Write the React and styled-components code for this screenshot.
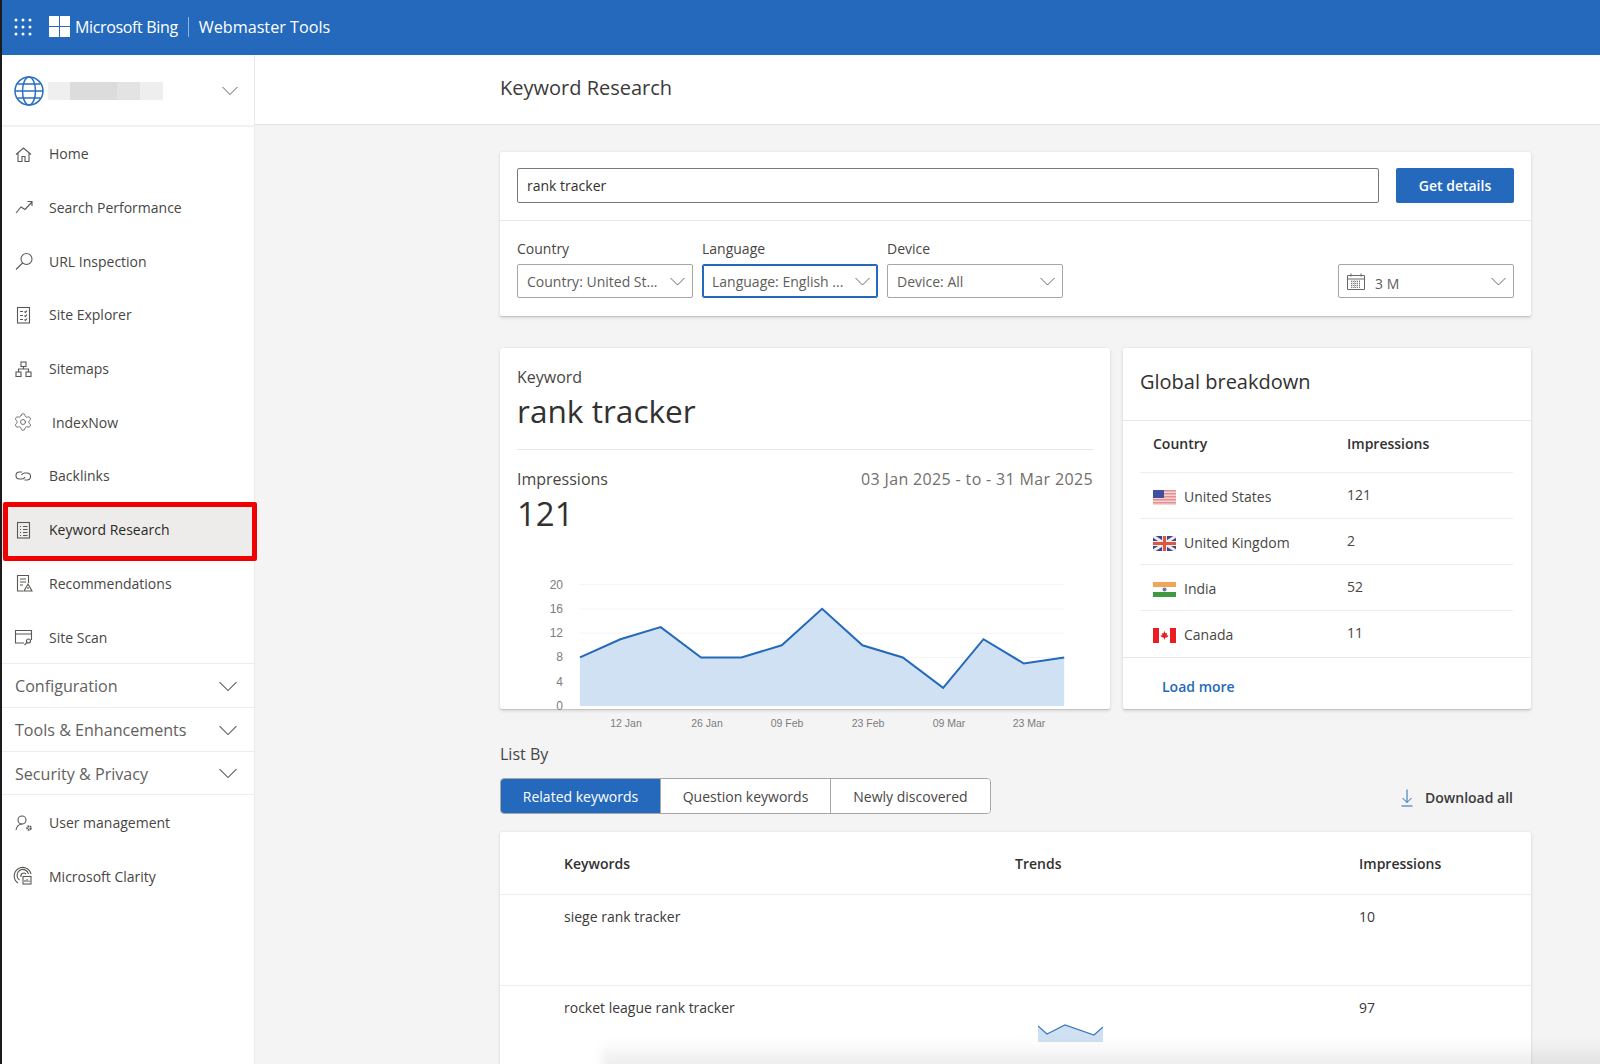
import React from "react";
import styled, { createGlobalStyle } from "styled-components";
import { Settings } from "lucide-react";

const GlobalStyle = createGlobalStyle`
  html, body {
    margin: 0;
    padding: 0;
    background: #f4f4f4;
    overflow: hidden;
  }
  * {
    box-sizing: border-box;
  }
`;

const Page = styled.div`
  position: relative;
  width: 1600px;
  height: 1064px;
  overflow: hidden;
  border-left: 2px solid #1b1b1b;
  background: #f4f4f4;
  font-family: "Open Sans", "Noto Sans", sans-serif;
  color: #323130;
  font-size: 14px;
`;

const TopBar = styled.header`
  display: flex;
  align-items: center;
  height: 55px;
  background: #2469bb;
  color: #fff;
  padding: 0 0 2px 12px;
`;

const AppsSpacer = styled.span`
  width: 17px;
`;

const BrandText = styled.span`
  font-size: 16px;
  letter-spacing: -0.35px;
  margin-left: 5px;
`;

const BrandDivider = styled.span`
  width: 1px;
  height: 20px;
  background: #8db3e0;
  margin: 0 10px 0 10px;
`;

const ProductText = styled.span`
  font-size: 16.2px;
  font-weight: 500;
`;

const Body = styled.div`
  display: flex;
  height: 1009px;
`;

const Sidebar = styled.nav`
  position: relative;
  flex: 0 0 253px;
  background: #fff;
  border-right: 1px solid #ebebeb;
`;

const SiteRow = styled.div`
  display: flex;
  align-items: center;
  height: 72px;
  padding: 2px 16px 0 12px;
  border-bottom: 2px solid #f2f2f2;
`;

const BlurredName = styled.div`
  width: 115px;
  height: 18px;
  margin-left: 4px;
  margin-right: auto;
  background: linear-gradient(90deg, #efefef 0 19%, #dcdcdc 19% 60%, #e3e3e3 60% 80%, #eeeeee 80%);
`;

const NavItem = styled.div`
  display: flex;
  align-items: center;
  height: 53.7px;
  padding-left: 11px;
  color: ${(p) => (p.$active ? "#2b2a29" : "#484644")};
  background: ${(p) => (p.$active ? "#edecea" : "transparent")};
  position: relative;

  /* the red annotation box drawn over the screenshot */
  ${(p) =>
    p.$active &&
    `
    &::after {
      content: "";
      position: absolute;
      left: 1px;
      right: -3px;
      top: -1px;
      bottom: -4px;
      border: 5px solid #f00000;
      border-radius: 2px;
    }
  `}
`;

const NavIcon = styled.span`
  display: flex;
  flex: 0 0 20px;
  width: 20px;
  height: 20px;
  color: #5a5856;
  margin-right: ${(p) => (p.$wide ? "19px" : "16px")};
`;

const GroupRow = styled.div`
  display: flex;
  align-items: center;
  justify-content: space-between;
  height: 44px;
  padding: 2px 17px 0 13px;
  border-top: 1px solid #ededed;
  font-size: 16.1px;
  color: #636160;
  &:last-of-type {
    border-bottom: 1px solid #ededed;
  }
`;

const Groups = styled.div`
  height: 133px;
  margin-top: -1px;
`;

const Main = styled.main`
  flex: 1;
  min-width: 0;
`;

const TitleBar = styled.div`
  display: flex;
  align-items: center;
  height: 70px;
  padding: 0 0 4px 245px;
  background: #fff;
  border-bottom: 1px solid #e3e3e3;
`;

const PageTitle = styled.h1`
  margin: 0;
  font-size: 20px;
  font-weight: 400;
  color: #3b3a39;
`;

const Content = styled.div`
  width: 1031px;
  margin: 27px 0 0 245px;
`;

const Card = styled.section`
  background: #fff;
  border-radius: 2px;
  box-shadow: 0 1.6px 3.6px rgba(0, 0, 0, 0.13), 0 0.3px 0.9px rgba(0, 0, 0, 0.11);
`;

const SearchRow = styled.div`
  display: flex;
  gap: 17px;
  height: 69px;
  padding: 16px 17px 0;
  border-bottom: 1px solid #e6e6e6;
`;

const SearchBox = styled.div`
  flex: 1;
  height: 35px;
  display: flex;
  align-items: center;
  padding: 0 9px;
  border: 1px solid #7a7977;
  border-radius: 2px;
  color: #323130;
`;

const PrimaryButton = styled.button`
  width: 118px;
  height: 35px;
  border: 0;
  border-radius: 2px;
  background: #2469bb;
  color: #fff;
  font: 600 14px "Open Sans", sans-serif;
`;

const FilterRow = styled.div`
  display: flex;
  align-items: flex-end;
  gap: 9px;
  height: 95px;
  padding: 0 17px 18px;
`;

const Field = styled.div`
  display: flex;
  flex-direction: column;
  gap: 6px;
  width: 176px;
  margin-left: ${(p) => (p.$push ? "auto" : "0")};
`;

const FieldLabel = styled.label`
  font-size: 14px;
  line-height: 19px;
  color: #484644;
`;

const Select = styled.div`
  display: flex;
  align-items: center;
  height: 34px;
  padding: 0 7px 0 9px;
  border: 1px solid ${(p) => (p.$focus ? "#2469bb" : "#a8a6a4")};
  box-shadow: ${(p) => (p.$focus ? "inset 0 0 0 1px #2469bb" : "none")};
  border-radius: 2px;
  color: #605e5c;
  white-space: nowrap;
  svg:last-child {
    margin-left: auto;
  }
`;

const DateIcon = styled.span`
  display: flex;
  margin: 0 10px 0 -1px;
  color: #6a6866;
`;

const DateText = styled.span`
  margin-top: 4px;
`;

const StatsGrid = styled.div`
  display: grid;
  grid-template-columns: 610px 408px;
  gap: 13px;
  height: 361px;
  margin-top: 32px;
`;

const KeywordCard = styled(Card)`
  height: 361px;
  padding: 19px 17px 0;
`;

const Eyebrow = styled.div`
  font-size: 16px;
  line-height: 20px;
  color: #484644;
`;

const BigKeyword = styled.div`
  margin-top: 2px;
  font-size: 31.6px;
  line-height: 44px;
  color: #323130;
  padding-bottom: 16px;
  border-bottom: 1px solid #e6e6e6;
`;

const StatHead = styled.div`
  display: flex;
  justify-content: space-between;
  margin-top: 19px;
  font-size: 16px;
  line-height: 20px;
  color: #484644;
`;

const DateRange = styled.span`
  color: #716f6d;
  letter-spacing: 0.35px;
`;

const BigNumber = styled.div`
  margin-top: 2px;
  font-size: 33px;
  line-height: 46px;
`;

const ChartSvg = styled.svg`
  display: block;
  margin: 33px 0 0 -17px;
  overflow: visible;
`;

const BreakdownCard = styled(Card)`
  display: flex;
  flex-direction: column;
  height: 361px;
`;

const BreakdownTitle = styled.h2`
  margin: 0;
  height: 73px;
  padding: 20px 17px 0;
  font-size: 20px;
  line-height: 28px;
  font-weight: 400;
  border-bottom: 1px solid #e6e6e6;
`;

const BreakdownTable = styled.div`
  flex: 1;
  padding: 0 18px 0 17px;
`;

const BreakdownRow = styled.div`
  display: grid;
  grid-template-columns: 194px 1fr;
  height: ${(p) => (p.$head ? 52 : 46)}px;
  padding: ${(p) => (p.$head ? "13px" : "12px")} 13px 0;
  border-bottom: 1px solid ${(p) => (p.$last ? "transparent" : "#eeeeee")};
  font-weight: ${(p) => (p.$head ? 600 : 400)};
  color: ${(p) => (p.$head ? "#323130" : "#484644")};
  line-height: 20px;
`;

const CountryCell = styled.div`
  display: flex;
  align-items: center;
  gap: 8px;
  height: 24px;
`;

const LoadMore = styled.div`
  height: 52px;
  padding: 19px 39px 0;
  border-top: 1px solid #e6e6e6;
  color: #2469bb;
  font-weight: 600;
  line-height: 20px;
`;

const ListTitle = styled.div`
  margin-top: 35px;
  font-size: 16px;
  line-height: 20px;
  color: #484644;
`;

const ListBar = styled.div`
  display: flex;
  align-items: center;
  justify-content: space-between;
  margin-top: 14px;
  padding-right: 18px;
`;

const TabGroup = styled.div`
  display: flex;
  height: 36px;
  border: 1px solid #a8a6a4;
  border-radius: 4px;
  overflow: hidden;
  background: #fff;
`;

const Tab = styled.div`
  display: flex;
  align-items: center;
  justify-content: center;
  width: ${(p) => p.$width}px;
  color: ${(p) => (p.$active ? "#fff" : "#484644")};
  background: ${(p) => (p.$active ? "#2469bb" : "#fff")};
  border-left: ${(p) => (p.$first ? "0" : "1px solid #a8a6a4")};
`;

const DownloadAll = styled.div`
  display: flex;
  align-items: center;
  gap: 11px;
  margin-top: 3px;
  font-weight: 600;
  color: #3b3a39;
`;

const TableCard = styled(Card)`
  margin-top: 18px;
  height: 300px;
`;

const TableRow = styled.div`
  display: grid;
  grid-template-columns: 451px 344px 1fr;
  height: ${(p) => (p.$head ? 63 : 91)}px;
  padding: ${(p) => (p.$head ? "22px" : "12px")} 0 0 64px;
  border-bottom: 1px solid #eeeeee;
  font-weight: ${(p) => (p.$head ? 600 : 400)};
  color: ${(p) => (p.$head ? "#323130" : "#3b3a39")};
  line-height: 20px;
`;

const TrendCell = styled.div`
  padding: 26px 0 0 23px;
`;

/* the soft shadow at the bottom edge of the screenshot */
const BottomFade = styled.div`
  position: absolute;
  left: 600px;
  right: -10px;
  bottom: -6px;
  height: 30px;
  background: linear-gradient(180deg, rgba(0, 0, 0, 0), rgba(0, 0, 0, 0.09));
  filter: blur(5px);
`;

const Line = (props) => (
  <svg width="20" height="20" viewBox="0 0 20 20" fill="none" stroke="currentColor" strokeWidth="1.1" {...props} />
);

const HomeIcon = () => (
  <Line><path d="M3 10.500 10.500 4 18 10.500M5 9v8.500h4v-5h3v5h4V9" /></Line>
);
const TrendIcon = () => (
  <Line><path d="M3 15 8 9l4 2.500 7-7.500M14.500 3.500H19V8" /></Line>
);
const SearchIcon = () => (
  <Line><circle cx="13.500" cy="8" r="5.500" /><path d="M9.500 12 3 18.500" /></Line>
);
const ExplorerIcon = () => (
  <Line>
    <rect x="4.500" y="2.500" width="12" height="15.500" />
    <path d="M7 6.500h3M7 10.500h3M7 14.500h3M11.500 6.500l1 1 1.500-2M11.500 10.500l1 1 1.500-2M11.500 14.500l1 1 1.500-2" />
  </Line>
);
const SitemapIcon = () => (
  <Line>
    <rect x="8" y="3" width="5" height="4.500" />
    <rect x="3" y="13" width="5" height="4.500" />
    <rect x="13" y="13" width="5" height="4.500" />
    <path d="M10.500 7.500V10M5.500 13v-3h10v3" />
  </Line>
);
const LinksIcon = () => (
  <Line>
    <path d="M9 6H6.500a3.500 3.500 0 0 0 0 7H9a3.500 3.500 0 0 0 3-2" />
    <path d="M11.500 14H14a3.500 3.500 0 0 0 0-7h-2.500a3.500 3.500 0 0 0-3 2" />
  </Line>
);
const ListDocIcon = () => (
  <Line>
    <rect x="4.500" y="2.500" width="12" height="15.500" />
    <path d="M7 6.500h1M10 6.500h4.500M7 9.500h1M10 9.500h4.500M7 12.500h1M10 12.500h4.500M7 15.500h1M10 15.500h4.500" />
  </Line>
);
const RecoIcon = () => (
  <Line>
    <path d="M10 18H4.500V2.500h11V10" />
    <path d="M7 6h6M7 9h6M7 12h3" />
    <path d="m15 11 4 7h-8zM15 14v2" />
  </Line>
);
const ScanIcon = () => (
  <Line>
    <path d="M11 16H2.500V3.500h16V13M2.500 7h16" />
    <circle cx="15.500" cy="14" r="2" />
    <path d="m14 15.500-2.500 2.500" />
  </Line>
);
const UserGearIcon = () => (
  <Line>
    <circle cx="9" cy="7" r="4" />
    <path d="M3 17c.5-3.500 2.500-5.500 6-6" />
    <circle cx="16" cy="15" r="1.800" strokeWidth="2" strokeDasharray="1.500 .6" />
  </Line>
);
const ClarityIcon = () => (
  <Line>
    <path d="M5 17a8.500 8.500 0 1 1 13-9" />
    <path d="M6.500 14a5.800 5.800 0 1 1 9-6" />
    <path d="M8 11a3 3 0 0 1 5-3" />
    <rect x="10" y="10.500" width="8" height="7.500" />
    <path d="M12 16v-2M14 16v-3M16 16v-1.500" />
  </Line>
);
const GearIcon = () => <Settings size={20} strokeWidth={1} />;

const Chevron = ({ size = 16, color = "#605e5c" }) => (
  <svg width={size} height={size * 0.6} viewBox="0 0 16 9.600" fill="none" stroke={color} strokeWidth="1">
    <path d="M.5 1 8 8.500 15.500 1" />
  </svg>
);

const AppsGrid = () => (
  <svg width="18" height="18" viewBox="0 0 18 18" fill="#fff">
    {[2, 9, 16].flatMap((y) =>
      [2, 9, 16].map((x) => <circle key={`${x}-${y}`} cx={x} cy={y} r="1.500" />)
    )}
  </svg>
);

const WindowsLogo = () => (
  <svg width="21" height="21" viewBox="0 0 21 21" fill="#fff">
    <rect width="10" height="10" />
    <rect x="11" width="10" height="10" />
    <rect y="11" width="10" height="10" />
    <rect x="11" y="11" width="10" height="10" />
  </svg>
);

const GlobeIcon = () => (
  <svg width="30" height="30" viewBox="0 0 30 30" fill="none" stroke="#2a6fc0" strokeWidth="1.500">
    <circle cx="15" cy="15" r="14" />
    <ellipse cx="15" cy="15" rx="6.500" ry="14" />
    <path d="M1 15h28M3.500 8h23M3.500 22h23" />
  </svg>
);

const CalendarIcon = () => (
  <svg width="18" height="17" viewBox="0 0 18 17" fill="none" stroke="currentColor" strokeWidth="1">
    <path d="M.5 2.500h17v14H.5zM.5 6h17M4 .5v3M14 .5v3" />
    <path d="M4 8.500h10M4 10.500h10M4 12.500h10M4 14.500h10M5 7.500v8M7.500 7.500v8M10 7.500v8M12.500 7.500v8" strokeDasharray="1 1" opacity=".8" />
  </svg>
);

const DownloadIcon = () => (
  <svg width="14" height="18" viewBox="0 0 14 18" fill="none" stroke="#2469bb" strokeWidth="1">
    <path d="M7 .5v13M2.500 9 7 13.500 11.500 9M1.500 17h11" />
  </svg>
);

const UsFlag = () => (
  <svg width="23" height="15" viewBox="0 0 23 15">
    <rect width="23" height="15" fill="#f6d3d3" />
    {[0, 3, 6, 9, 12].map((y) => (
      <rect key={y} y={y} width="23" height="1.500" fill="#e58f8f" />
    ))}
    <rect width="11" height="8" fill="#3f50a0" />
  </svg>
);

const UkFlag = () => (
  <svg width="23" height="15" viewBox="0 0 23 15">
    <rect width="23" height="15" fill="#33488f" />
    <path d="M0 0 23 15M23 0 0 15" stroke="#f3e9e9" strokeWidth="3" />
    <path d="M11.500 0v15M0 7.500h23" stroke="#f3e9e9" strokeWidth="5" />
    <path d="M11.500 0v15M0 7.500h23" stroke="#d9583f" strokeWidth="3" />
  </svg>
);

const InFlag = () => (
  <svg width="23" height="15" viewBox="0 0 23 15">
    <rect width="23" height="5" fill="#f1a557" />
    <rect y="5" width="23" height="5" fill="#fff" />
    <rect y="10" width="23" height="5" fill="#3f9a3f" />
    <circle cx="11.500" cy="7.500" r="2" fill="#6a78a8" />
  </svg>
);

const CaFlag = () => (
  <svg width="23" height="15" viewBox="0 0 23 15">
    <rect width="23" height="15" fill="#fff" />
    <rect width="6" height="15" fill="#ea1c24" />
    <rect x="17" width="6" height="15" fill="#ea1c24" />
    <path d="M11.500 3 12.700 5.500l1.500-.6-.6 2.800 1.800-.6-.5 1.700-3 1.200v1.500h-.8V10l-3-1.200-.5-1.700 1.800.6-.6-2.800 1.500.6z" fill="#ea1c24" />
  </svg>
);

const navTop = [
  { label: "Home", icon: <HomeIcon /> },
  { label: "Search Performance", icon: <TrendIcon /> },
  { label: "URL Inspection", icon: <SearchIcon /> },
  { label: "Site Explorer", icon: <ExplorerIcon /> },
  { label: "Sitemaps", icon: <SitemapIcon /> },
  { label: "IndexNow", icon: <GearIcon />, wide: true },
  { label: "Backlinks", icon: <LinksIcon /> },
  { label: "Keyword Research", icon: <ListDocIcon />, active: true },
  { label: "Recommendations", icon: <RecoIcon /> },
  { label: "Site Scan", icon: <ScanIcon /> },
];

const navBottom = [
  { label: "User management", icon: <UserGearIcon /> },
  { label: "Microsoft Clarity", icon: <ClarityIcon /> },
];

const groups = ["Configuration", "Tools & Enhancements", "Security & Privacy"];

const countries = [
  { name: "United States", value: 121, flag: <UsFlag /> },
  { name: "United Kingdom", value: 2, flag: <UkFlag /> },
  { name: "India", value: 52, flag: <InFlag /> },
  { name: "Canada", value: 11, flag: <CaFlag /> },
];

const trend = [8, 11, 13, 8, 8, 10, 16, 10, 8, 3, 11, 7, 8];
const toX = (i) => 80 + i * 40.35;
const toY = (v) => 136 - v * 6.07;
const linePoints = trend.map((v, i) => `${toX(i)},${toY(v)}`).join(" ");
const areaPoints = `${toX(0)},136 ${linePoints} ${toX(12)},136`;
const xLabels = [
  ["12 Jan", 126],
  ["26 Jan", 207],
  ["09 Feb", 287],
  ["23 Feb", 368],
  ["09 Mar", 449],
  ["23 Mar", 529],
];

const TrendChart = () => (
  <ChartSvg width="610" height="170" viewBox="0 0 610 170" fontFamily="'Liberation Sans', sans-serif">
    {[20, 16, 12, 8].map((v) => (
      <line key={v} x1="80" x2="564" y1={toY(v)} y2={toY(v)} stroke="#f4f4f4" />
    ))}
    <polygon points={areaPoints} fill="#d0e1f3" />
    <polyline points={linePoints} fill="none" stroke="#2469bb" strokeWidth="2" />
    {[20, 16, 12, 8, 4, 0].map((v) => (
      <text key={v} x="63" y={toY(v) + 4} textAnchor="end" fontSize="12" fill="#7d7d7d">{v}</text>
    ))}
    {xLabels.map(([label, x]) => (
      <text key={label} x={x} y="157" textAnchor="middle" fontSize="10.500" fill="#7d7d7d">{label}</text>
    ))}
  </ChartSvg>
);

const Sparkline = () => (
  <svg width="65" height="18" viewBox="0 0 65 18">
    <polygon points="0,2 9,10 27,1 56,11 65,3 65,18 0,18" fill="#cfe0f3" />
    <polyline points="0,2 9,10 27,1 56,11 65,3" fill="none" stroke="#3a77c0" strokeWidth="1.200" />
  </svg>
);

const renderNav = (item) => (
  <NavItem key={item.label} $active={item.active}>
    <NavIcon $wide={item.wide}>{item.icon}</NavIcon>
    {item.label}
  </NavItem>
);

export default function App() {
  return (
    <Page>
      <GlobalStyle />
      <TopBar>
        <AppsGrid />
        <AppsSpacer />
        <WindowsLogo />
        <BrandText>Microsoft Bing</BrandText>
        <BrandDivider />
        <ProductText>Webmaster Tools</ProductText>
      </TopBar>
      <Body>
        <Sidebar>
          <SiteRow>
            <GlobeIcon />
            <BlurredName />
            <Chevron />
          </SiteRow>
          {navTop.map(renderNav)}
          <Groups>
            {groups.map((g) => (
              <GroupRow key={g}>
                {g}
                <Chevron size={18} />
              </GroupRow>
            ))}
          </Groups>
          {navBottom.map(renderNav)}
        </Sidebar>
        <Main>
          <TitleBar>
            <PageTitle>Keyword Research</PageTitle>
          </TitleBar>
          <Content>
            <Card>
              <SearchRow>
                <SearchBox>rank tracker</SearchBox>
                <PrimaryButton>Get details</PrimaryButton>
              </SearchRow>
              <FilterRow>
                <Field>
                  <FieldLabel>Country</FieldLabel>
                  <Select>Country: United St...<Chevron size={15} /></Select>
                </Field>
                <Field>
                  <FieldLabel>Language</FieldLabel>
                  <Select $focus>Language: English ...<Chevron size={15} /></Select>
                </Field>
                <Field>
                  <FieldLabel>Device</FieldLabel>
                  <Select>Device: All<Chevron size={15} /></Select>
                </Field>
                <Field $push>
                  <Select>
                    <DateIcon><CalendarIcon /></DateIcon>
                    <DateText>3 M</DateText>
                    <Chevron size={15} />
                  </Select>
                </Field>
              </FilterRow>
            </Card>
            <StatsGrid>
              <KeywordCard>
                <Eyebrow>Keyword</Eyebrow>
                <BigKeyword>rank tracker</BigKeyword>
                <StatHead>
                  <span>Impressions</span>
                  <DateRange>03 Jan 2025 - to - 31 Mar 2025</DateRange>
                </StatHead>
                <BigNumber>121</BigNumber>
                <TrendChart />
              </KeywordCard>
              <BreakdownCard>
                <BreakdownTitle>Global breakdown</BreakdownTitle>
                <BreakdownTable>
                  <BreakdownRow $head>
                    <span>Country</span>
                    <span>Impressions</span>
                  </BreakdownRow>
                  {countries.map((c, i) => (
                    <BreakdownRow key={c.name} $last={i === countries.length - 1}>
                      <CountryCell>{c.flag}{c.name}</CountryCell>
                      <span>{c.value}</span>
                    </BreakdownRow>
                  ))}
                </BreakdownTable>
                <LoadMore>Load more</LoadMore>
              </BreakdownCard>
            </StatsGrid>
            <ListTitle>List By</ListTitle>
            <ListBar>
              <TabGroup>
                <Tab $active $first $width={159}>Related keywords</Tab>
                <Tab $width={170}>Question keywords</Tab>
                <Tab $width={160}>Newly discovered</Tab>
              </TabGroup>
              <DownloadAll><DownloadIcon />Download all</DownloadAll>
            </ListBar>
            <TableCard>
              <TableRow $head>
                <span>Keywords</span>
                <span>Trends</span>
                <span>Impressions</span>
              </TableRow>
              <TableRow>
                <span>siege rank tracker</span>
                <span />
                <span>10</span>
              </TableRow>
              <TableRow>
                <span>rocket league rank tracker</span>
                <TrendCell><Sparkline /></TrendCell>
                <span>97</span>
              </TableRow>
            </TableCard>
          </Content>
        </Main>
      </Body>
      <BottomFade />
    </Page>
  );
}
